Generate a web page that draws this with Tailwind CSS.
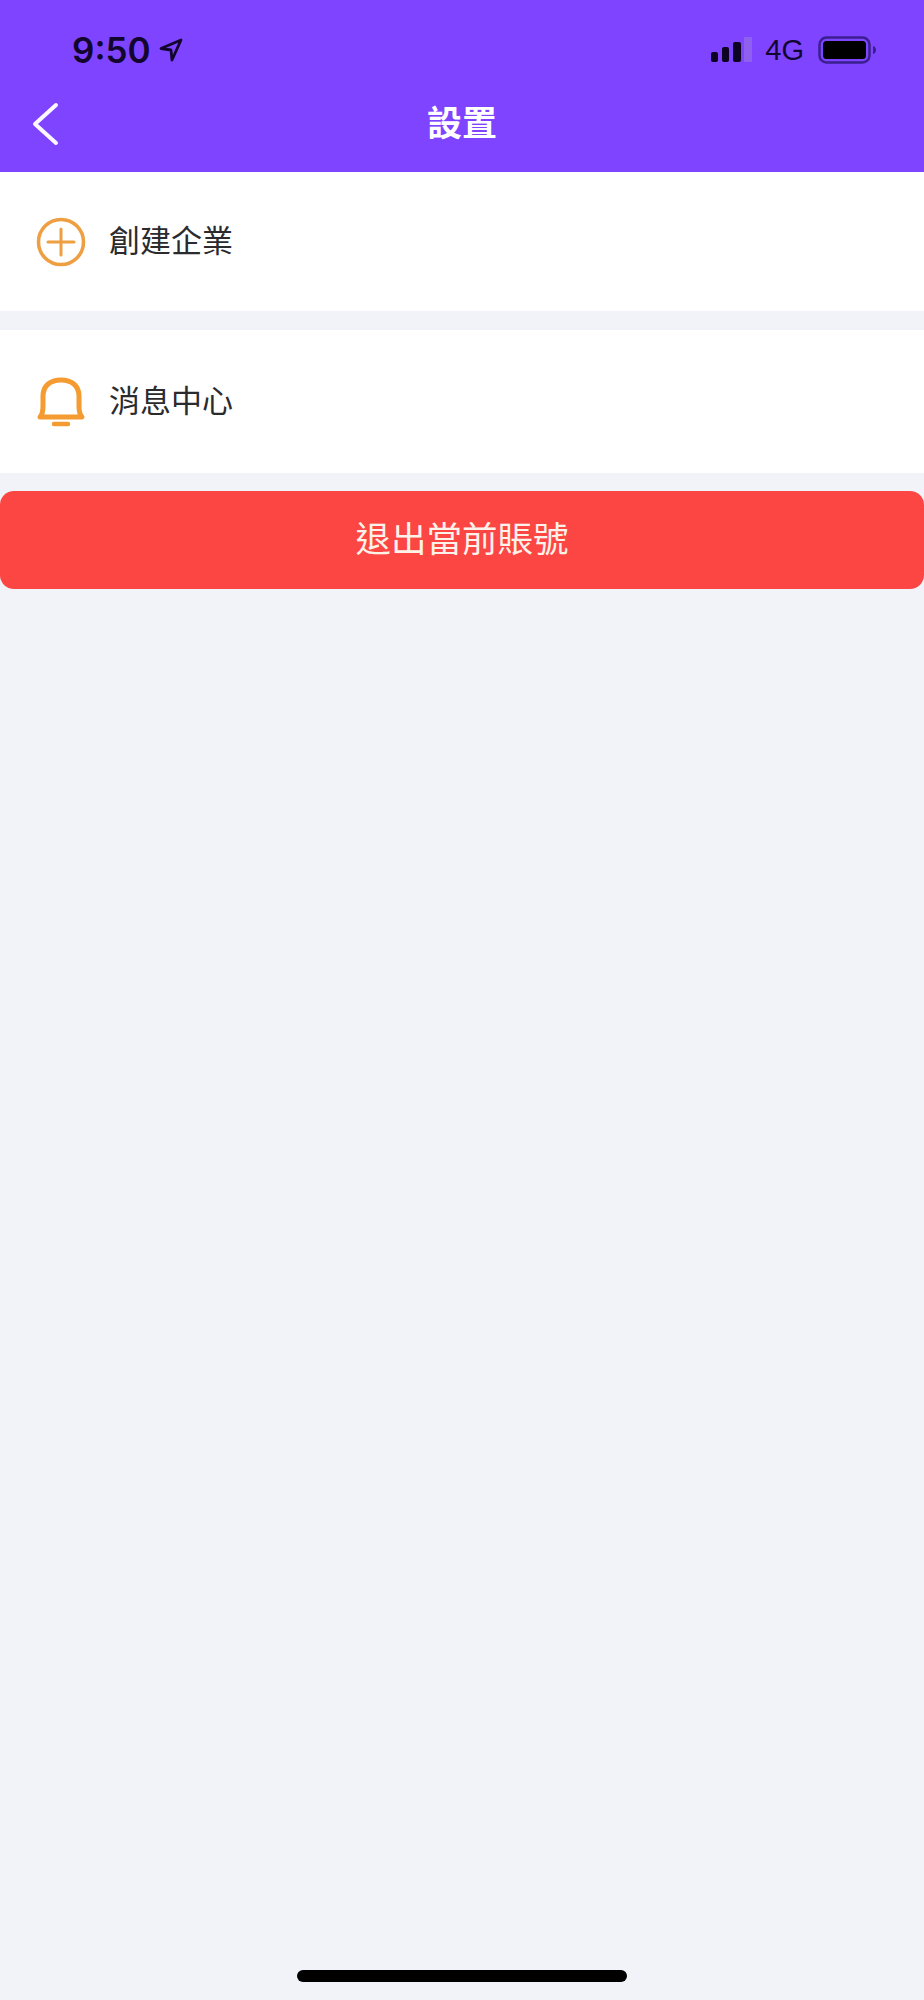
<!DOCTYPE html>
<html lang="zh-Hant">

<head>
    <meta charset="UTF-8">
    <meta name="viewport" content="width=device-width, initial-scale=1.0">
    <title>設置</title>
    <script src="https://cdn.jsdelivr.net/npm/@tailwindcss/browser@4"></script>
</head>

<body class="bg-[#f2f3f8] h-[2000px] flex flex-col font-['Liberation_Sans','Noto_Sans_CJK_TC',sans-serif]">

    <!-- Header -->
    <header class="w-full h-[172px] bg-[#7f44ff] shrink-0">
        <div class="h-[100px] flex items-center justify-between pl-[72px] pr-[48px]">
            <div class="flex items-center gap-[8px] text-[#12062e]">
                <span class="text-[35px] leading-none font-['Inter',sans-serif] font-semibold">9:50</span>
                <svg width="24" height="24" viewBox="0 0 24 24" fill="none" stroke="currentColor" stroke-width="2.800" stroke-linejoin="round"><path d="M22 2 2 10.500l10 1.500 1 10z"/></svg>
            </div>
            <div class="flex items-center text-[#12062e]">
                <svg width="42" height="26" viewBox="0 0 42 26" class="mr-[12px]"><rect x="0" y="15" width="7" height="10" rx="2" fill="#0c0420"/><rect x="11" y="10" width="7" height="15" rx="2" fill="#0c0420"/><rect x="22" y="5" width="8" height="20" rx="2" fill="#0c0420"/><rect x="33" y="0" width="8" height="25" fill="#8f60f0"/></svg>
                <span class="text-[29px] leading-none mr-[14px]">4G</span>
                <svg width="58" height="28" viewBox="0 0 58 28"><rect x="1.500" y="1.500" width="50" height="25" rx="7" fill="none" stroke="#3b1f8f" stroke-width="2.500"/><rect x="5" y="5" width="43" height="18" rx="3.500" fill="#000"/><path d="M55 10c2 .6 3 2 3 4s-1 3.400-3 4z" fill="#3b1f8f"/></svg>
            </div>
        </div>
        <div class="relative h-[72px] flex items-center justify-center">
            <svg width="28" height="44" viewBox="0 0 28 44" class="absolute left-[31px] top-[2px]" fill="none" stroke="#fdf8ff" stroke-width="4" stroke-linecap="round" stroke-linejoin="round"><path d="M25 3 4 22l21 19"/></svg>
            <h1 class="text-[35px] font-bold text-white leading-none mt-[-26px]">設置</h1>
        </div>
    </header>

    <!-- Opciones -->
    <div class="h-[139px] bg-white flex items-center pl-[36px] gap-[23px]">
        <svg width="50" height="50" viewBox="0 0 50 50" fill="none" stroke="#ee9f42" stroke-width="3.500" stroke-linecap="round"><circle cx="25" cy="25" r="22.500"/><path d="M25 12v26" stroke-width="3"/><path d="M12 25h26" stroke-width="3"/></svg>
        <span class="text-[31px] text-[#2b2b2e] leading-none">創建企業</span>
    </div>

    <div class="h-[143px] bg-white mt-[19px] flex items-center pl-[36px] gap-[23px]">
        <svg width="50" height="50" viewBox="0 0 50 50" fill="none" stroke="#f49c32" stroke-width="5" stroke-linecap="round" stroke-linejoin="round"><path d="M4 40c2-2 3-6 3-11V19C7 9 14 3 25 3s18 6 18 16v10c0 5 1 9 3 11z"/><path d="M18 47h14" stroke-width="4.500"/></svg>
        <span class="text-[31px] text-[#2b2b2e] leading-none mt-[-1px]">消息中心</span>
    </div>

    <!-- Salir -->
    <button class="h-[98px] mt-[18px] w-full bg-[#fb4643] rounded-[14px] text-[35.500px] text-[#fdf2ea] flex items-center justify-center pt-[2px]">
        退出當前賬號
    </button>

    <!-- Home bar -->
    <div class="mt-auto mb-[18px] mx-auto w-[330px] h-[12px] rounded-full bg-black"></div>

</body>

</html>
